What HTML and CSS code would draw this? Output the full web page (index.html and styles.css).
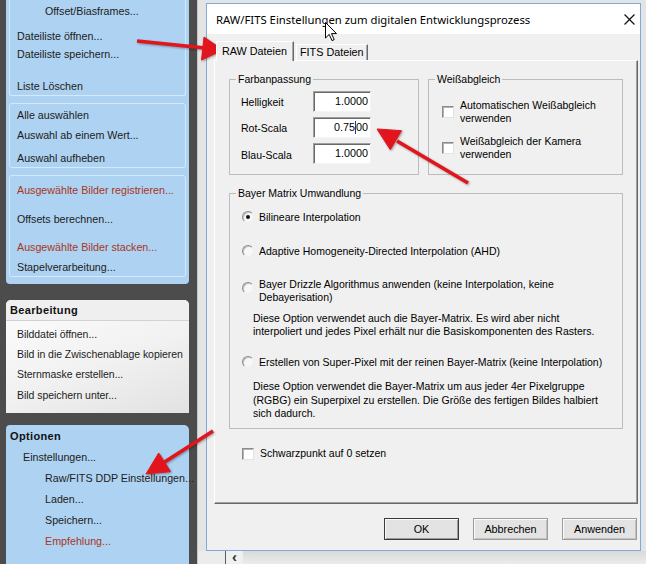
FILE: index.html
```html
<!DOCTYPE html>
<html lang="de">
<head>
<meta charset="utf-8">
<title>RAW/FITS Einstellungen</title>
<link rel="stylesheet" href="styles.css">
</head>
<body>
<div class="screen">
  <aside class="sidebar">
    <section class="panel blue p1">
      <div class="grp g1">
        <div class="it it-first">Offset/Biasframes...</div>
        <div class="it m5">Dateiliste öffnen...</div>
        <div class="it">Dateiliste speichern...</div>
        <div class="it m14">Liste Löschen</div>
      </div>
      <div class="grp g2">
        <div class="it m2">Alle auswählen</div>
        <div class="it m2">Auswahl ab einem Wert...</div>
        <div class="it m5">Auswahl aufheben</div>
      </div>
      <div class="grp g3">
        <div class="it m5 red">Ausgewählte Bilder registrieren...</div>
        <div class="it m11">Offsets berechnen...</div>
        <div class="it m10 red">Ausgewählte Bilder stacken...</div>
        <div class="it m2">Stapelverarbeitung...</div>
      </div>
    </section>
    <section class="panel white p2">
      <div class="phead">Bearbeitung</div>
      <div class="plist">
        <div class="pit">Bilddatei öffnen...</div>
        <div class="pit">Bild in die Zwischenablage kopieren</div>
        <div class="pit">Sternmaske erstellen...</div>
        <div class="pit m1">Bild speichern unter...</div>
      </div>
    </section>
    <section class="panel blue p3">
      <div class="phead3">Optionen</div>
      <div class="oit lv1">Einstellungen...</div>
      <div class="oit lv2">Raw/FITS DDP Einstellungen...</div>
      <div class="oit lv2">Laden...</div>
      <div class="oit lv2">Speichern...</div>
      <div class="oit lv2 red">Empfehlung...</div>
    </section>
  </aside>

  <main class="desk">
    <div class="dialog">
      <div class="titlebar">
        <span class="title">RAW/FITS Einstellungen zum digitalen Entwicklungsprozess</span>
        <svg class="close" viewBox="0 0 10 10" width="11" height="11"><path d="M0.5 0.5 L9.5 9.5 M9.5 0.5 L0.5 9.5" stroke="#111" stroke-width="1.1" fill="none"/></svg>
      </div>
      <div class="dbody">
        <div class="tabs">
          <div class="tab active">RAW Dateien</div>
          <div class="tab inactive">FITS Dateien</div>
        </div>
        <div class="tabpage">
          <div class="toprow">
            <fieldset class="gb farb">
              <legend>Farbanpassung</legend>
              <div class="fgrid">
                <span class="flabel">Helligkeit</span><div class="inp">1.0000</div>
                <span class="flabel">Rot-Scala</span><div class="inp">0.75<span class="caret"></span>00</div>
                <span class="flabel">Blau-Scala</span><div class="inp">1.0000</div>
              </div>
            </fieldset>
            <fieldset class="gb weiss">
              <legend>Weißabgleich</legend>
              <div class="chkrow w1"><span class="chk"></span><span class="lbl">Automatischen Weißabgleich<br>verwenden</span></div>
              <div class="chkrow w2"><span class="chk"></span><span class="lbl">Weißabgleich der Kamera<br>verwenden</span></div>
            </fieldset>
          </div>
          <fieldset class="gb bayer">
            <legend>Bayer Matrix Umwandlung</legend>
            <div class="radrow r1"><span class="radio checked"></span><span class="lbl">Bilineare Interpolation</span></div>
            <div class="radrow r2"><span class="radio"></span><span class="lbl">Adaptive Homogeneity-Directed Interpolation (AHD)</span></div>
            <div class="radrow r3"><span class="radio"></span><span class="lbl">Bayer Drizzle Algorithmus anwenden (keine Interpolation, keine<br>Debayerisation)</span></div>
            <p class="desc d1">Diese Option verwendet auch die Bayer-Matrix. Es wird aber nicht<br>interpoliert und jedes Pixel erhält nur die Basiskomponenten des Rasters.</p>
            <div class="radrow r4"><span class="radio"></span><span class="lbl">Erstellen von Super-Pixel mit der reinen Bayer-Matrix (keine Interpolation)</span></div>
            <p class="desc d2">Diese Option verwendet die Bayer-Matrix um aus jeder 4er Pixelgruppe<br>(RGBG) ein Superpixel zu erstellen. Die Größe des fertigen Bildes halbiert<br>sich dadurch.</p>
          </fieldset>
          <div class="chkrow schwarz"><span class="chk"></span><span class="lbl">Schwarzpunkt auf 0 setzen</span></div>
        </div>
        <div class="buttons">
          <button class="btn default">OK</button>
          <button class="btn">Abbrechen</button>
          <button class="btn">Anwenden</button>
        </div>
      </div>
    </div>
    <div class="desk-bottom">
      <span class="db-left"></span>
      <span class="db-arrow">&lsaquo;</span>
      <span class="db-rest"></span>
    </div>
  </main>

  <svg class="cursor" width="13" height="20" viewBox="0 0 13 20">
    <path d="M0.5 0.5 L0.5 16 L4.2 12.4 L7 18.6 L9.2 17.6 L6.5 11.6 L11.5 11.6 Z" fill="#fff" stroke="#000" stroke-width="1" stroke-linejoin="miter"/>
  </svg>

  <svg class="arrows" width="646" height="564" viewBox="0 0 646 564">
    <g fill="#e2141c" stroke="#e2141c">
      <line x1="137" y1="41" x2="205" y2="48" stroke-width="3.6"/>
      <polygon points="223,50 204,37 201.5,60" stroke-width="1"/>
      <line x1="468" y1="183" x2="397" y2="141" stroke-width="3.6"/>
      <polygon points="377,129 401.5,130.7 390.3,149.7" stroke-width="1"/>
      <line x1="213" y1="431" x2="163" y2="463" stroke-width="3.6"/>
      <polygon points="146,474 170.5,471.6 158.7,453" stroke-width="1"/>
    </g>
  </svg>
</div>
</body>
</html>
```

FILE: styles.css
```css
* { box-sizing: border-box; }

body {
  margin: 0;
  background: #4c4c4c;
}

.screen {
  position: relative;
  width: 646px;
  height: 564px;
  overflow: hidden;
  display: flex;
  background: #4c4c4c;
  font-family: "Liberation Sans", Arial, sans-serif;
}

/* ---------- Sidebar ---------- */
.sidebar {
  flex: none;
  width: 183px;
  margin-left: 6px;
  display: flex;
  flex-direction: column;
  font-size: 10.7px;
  color: #1c1c1c;
}

.panel.blue { background: #aed2f1; }

.p1 {
  height: 284px;
  border-radius: 0 0 4px 4px;
  padding: 0 3px;
}

.grp {
  border: 1px solid #d6e9fa;
  border-radius: 3px;
}

.g1 {
  border-top: none;
  border-radius: 0 0 3px 3px;
}

.g2, .g3 { margin-top: 7px; }

.it {
  height: 18px;
  line-height: 18px;
  padding-left: 7px;
  white-space: nowrap;
}

.it-first {
  height: 22px;
  line-height: 22px;
  padding-left: 35px;
}

.m1 { margin-top: 1px; }
.m2 { margin-top: 2px; }
.m5 { margin-top: 5px; }
.m10 { margin-top: 10px; }
.m11 { margin-top: 11px; }
.m14 { margin-top: 14px; }

.red { color: #a9361d; }

.p2 {
  margin-top: 16px;
  height: 113px;
  border-radius: 5px 5px 0 0;
  background: linear-gradient(160deg, #fdfdfd 0%, #f1f1f1 55%, #e2e2e2 100%);
}

.phead {
  height: 21px;
  line-height: 20px;
  padding-left: 4px;
  font-weight: bold;
  font-size: 11px;
  letter-spacing: 0.35px;
  color: #111;
  background: #efefef;
  border-bottom: 1px solid #d2d2d2;
  border-radius: 5px 5px 0 0;
}

.plist { padding-top: 3px; }

.pit {
  height: 20px;
  line-height: 20px;
  padding-left: 11px;
  font-size: 10.5px;
  letter-spacing: -0.05px;
  white-space: nowrap;
}

.p3 {
  margin-top: 12px;
  flex: 1;
  border-radius: 4px 5px 0 0;
}

.phead3 {
  height: 22px;
  line-height: 22px;
  padding-left: 4px;
  font-weight: bold;
  font-size: 11px;
  letter-spacing: 0.35px;
  color: #111;
}

.oit {
  height: 21px;
  line-height: 21px;
  white-space: nowrap;
}

.lv1 { padding-left: 17px; }
.lv2 { padding-left: 39px; }

/* ---------- Desktop / background window ---------- */
.desk {
  flex: none;
  width: 449px;
  margin-left: 8px;
  background: #e4e4e4;
  border-left: 1px solid #c6c6c6;
  display: flex;
  flex-direction: column;
}

.desk-bottom {
  display: flex;
  height: 13px;
}

.db-left {
  width: 28px;
  background: #ececec;
  border-right: 1px solid #5c5c5c;
}

.db-arrow {
  width: 17px;
  background: #f0f0f0;
  font-size: 15px;
  line-height: 11px;
  font-weight: bold;
  color: #333;
  text-align: center;
}

.db-rest {
  flex: 1;
  background: linear-gradient(#d9d9d9, #ececec);
}

/* ---------- Dialog ---------- */
.dialog {
  flex: none;
  margin: 3px 0 0 8px;
  width: 435px;
  height: 548px;
  border: 1px solid #7faad8;
  background: #f0f0f0;
  display: flex;
  flex-direction: column;
  color: #000;
}

.titlebar {
  flex: none;
  height: 30px;
  background: #fff;
  display: flex;
  align-items: center;
  padding: 0 5px 0 9px;
  font-family: "Noto Sans", "Liberation Sans", sans-serif;
  font-size: 11.3px;
}

.close { margin-left: auto; }

.dbody {
  flex: 1;
  padding: 7px 3px 0 0;
  font-size: 10.5px;
}

.tabs {
  display: flex;
  align-items: flex-end;
  height: 19px;
  margin-left: 9px;
  position: relative;
  z-index: 1;
}

.tab {
  background: #f0f0f0;
  border: 1px solid;
  border-bottom: none;
  border-color: #ffffff #6a6a6a transparent #ffffff;
  box-shadow: inset -1px 0 0 #a8a8a8;
  white-space: nowrap;
}

.tab.active {
  width: 78px;
  height: 20px;
  margin-bottom: -1px;
  padding: 2px 0 0 5px;
  line-height: 14px;
  font-size: 10.8px;
}

.tab.inactive {
  width: 72px;
  height: 16px;
  margin-left: 2px;
  padding: 1px 0 0 3px;
  line-height: 13px;
  font-size: 10.8px;
}

.tabpage {
  margin-left: 7px;
  width: 424px;
  height: 444px;
  border: 1px solid;
  border-color: #ffffff #696969 #696969 #ffffff;
  box-shadow: inset -1px -1px 0 #a0a0a0;
  padding: 12px 0 0 14px;
}

.toprow {
  display: flex;
  gap: 9px;
}

.gb {
  margin: 0;
  padding: 0;
  min-width: 0;
  border: 1px solid #bcbcbc;
}

.gb legend {
  margin-left: 6px;
  padding: 0 2px;
  line-height: 13px;
  font-size: 10.5px;
}

.farb { width: 190px; height: 102px; }
.weiss { width: 195px; height: 102px; }

.fgrid {
  display: grid;
  grid-template-columns: 72px 58px;
  grid-auto-rows: 21px;
  row-gap: 5.3px;
  align-items: center;
  margin: 4.5px 0 0 11px;
}

.flabel {
  font-size: 10.5px;
  padding-top: 2px;
}

.inp {
  width: 58px;
  height: 21px;
  background: #fff;
  border: 1px solid;
  border-color: #a0a0a0 #f4f4f4 #f4f4f4 #a0a0a0;
  box-shadow: inset 1px 1px 0 #696969;
  text-align: right;
  padding: 2px 2px 0 0;
  line-height: 14px;
  font-size: 10.8px;
}

.caret {
  display: inline-block;
  width: 0;
  height: 13px;
  border-left: 1px solid #1b3f8b;
  vertical-align: -3px;
}

.chkrow {
  display: flex;
  align-items: center;
  gap: 6px;
  margin-left: 13px;
}

.chkrow .lbl {
  line-height: 13px;
  font-size: 10.5px;
  white-space: nowrap;
}

.w1 { margin-top: 12.5px; }
.w2 { margin-top: 10px; }

.chk {
  flex: none;
  width: 12px;
  height: 12px;
  background: #fff;
  border: 1px solid;
  border-color: #8a8a8a #e2e2e2 #e2e2e2 #8a8a8a;
  box-shadow: inset 1px 1px 0 #b4b4b4;
}

.bayer {
  margin-top: 11.5px;
  width: 394px;
  height: 242.5px;
}

.radrow {
  display: flex;
  align-items: flex-start;
  gap: 5px;
  margin-left: 12px;
}

.radrow .lbl {
  line-height: 13px;
  font-size: 10.5px;
  white-space: nowrap;
}

.radio {
  flex: none;
  position: relative;
  width: 12px;
  height: 12px;
  margin-top: 0.5px;
  border-radius: 50%;
  background: #f7f7f7;
  border: 1px solid;
  border-color: #8c8c8c #eeeeee #eeeeee #8c8c8c;
  box-shadow: inset 1px 1px 0 #c4c4c4;
}

.radio.checked::after {
  content: "";
  position: absolute;
  left: 3px;
  top: 3px;
  width: 4px;
  height: 4px;
  border-radius: 50%;
  background: #111;
}

.r1 { margin-top: 11px; }
.r2 { margin-top: 21px; }
.r3 { margin-top: 20px; }
.r3 .radio { margin-top: 4px; }
.r4 { margin-top: 17px; }

.desc {
  margin: 0 0 0 23px;
  line-height: 13.5px;
  font-size: 10.5px;
  white-space: nowrap;
}

.d1 { margin-top: 8px; }
.d2 { margin-top: 11.5px; }

.schwarz { margin-top: 18px; }

.buttons {
  display: flex;
  justify-content: flex-end;
  gap: 14px;
  margin-top: 14px;
}

.btn {
  width: 75px;
  height: 22px;
  padding: 0;
  font-family: "Liberation Sans", Arial, sans-serif;
  font-size: 10.8px;
  color: #000;
  background: #e3e3e3;
  border: 1px solid #9c9c9c;
  box-shadow: inset 1px 1px 0 #fafafa, inset -1px -1px 0 #c2c2c2;
}

.btn.default {
  border-color: #3a3a3a;
  box-shadow: inset 1px 1px 0 #fafafa, inset -1px -1px 0 #9a9a9a;
}

/* ---------- Overlays ---------- */
.cursor {
  position: absolute;
  left: 325px;
  top: 22px;
}

.arrows {
  position: absolute;
  left: 0;
  top: 0;
  pointer-events: none;
  filter: drop-shadow(1px 1px 1px rgba(0, 0, 0, 0.35));
}
```
